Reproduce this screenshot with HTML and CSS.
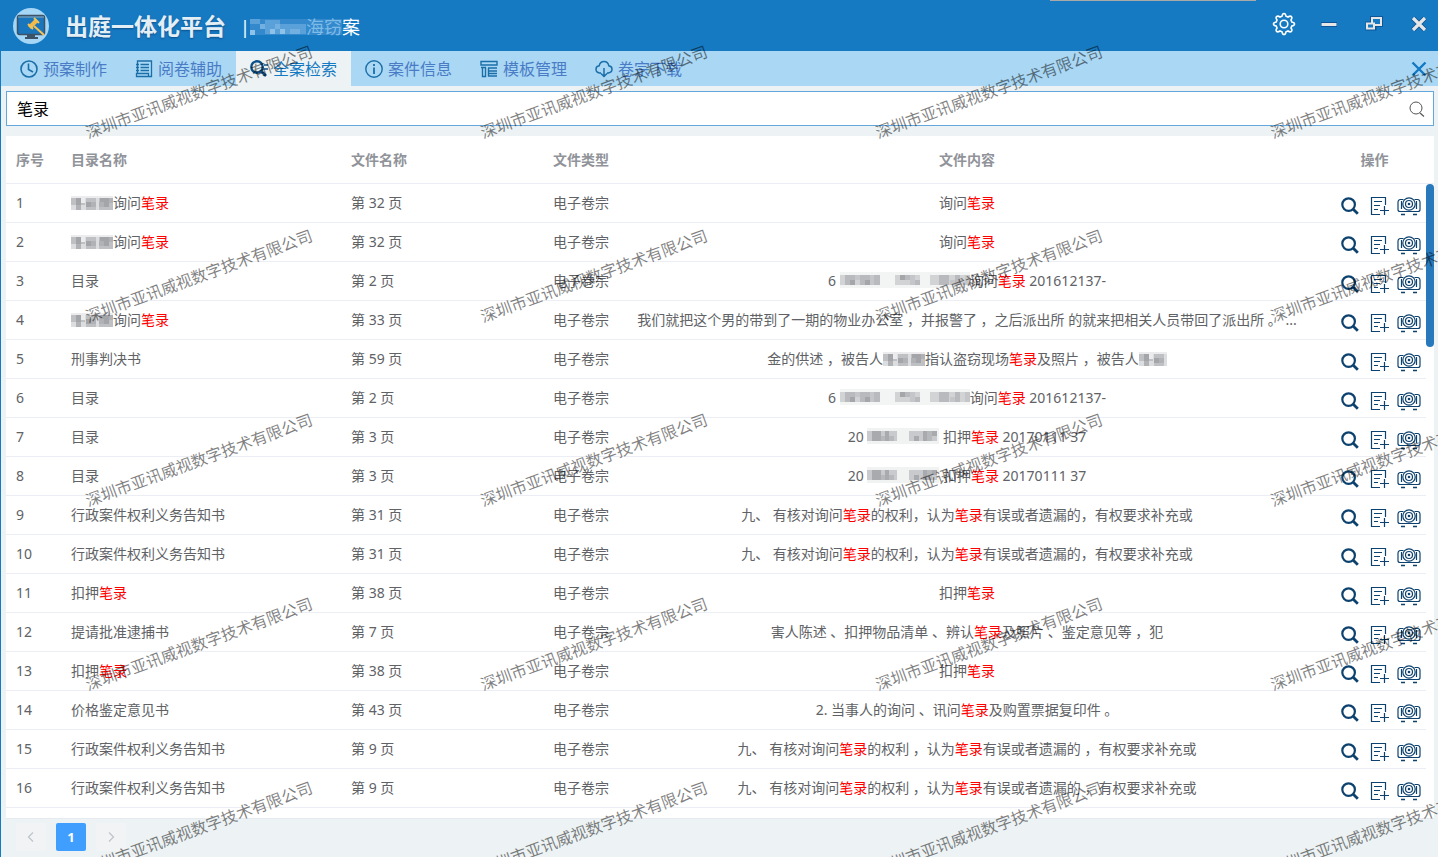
FILE: index.html
```
<!DOCTYPE html>
<html lang="zh-CN">
<head>
<meta charset="utf-8">
<title>出庭一体化平台</title>
<link rel="stylesheet" href="styles.css">
</head>
<body>
<svg class="sprite" aria-hidden="true">
  <symbol id="i-find" viewBox="0 0 18 18"><circle cx="7.6" cy="7.6" r="6.3" fill="none" stroke="currentColor" stroke-width="2.2"/><path d="M12 12l4.8 4.8" stroke="currentColor" stroke-width="2.8" fill="none"/></symbol>
  <symbol id="i-note" viewBox="0 0 20 20"><path d="M15.500 9V1.500H1.500V18.500H10M4 5.500H12M4 9.500H10M4 13.500H8M10 14.500H19M14.500 10V19" fill="none" stroke="currentColor" stroke-width="1.200"/></symbol>
  <symbol id="i-proj" viewBox="0 0 24 20"><g fill="none" stroke="currentColor" stroke-width="1.200"><path d="M6.500 3.500H3Q1 4 1 6V13.500Q1 15.500 3 15.500H21Q23 15.500 23 13.500V6Q23 4 21 3.500H17.500M4.500 5V13M19.500 5V13"/><circle cx="12" cy="8" r="6.200" fill="#fff"/><circle cx="12" cy="8" r="3.500"/></g><circle cx="12" cy="8" r="1.300" fill="currentColor"/><path d="M4 18.500H8M16 18.500H20" stroke="currentColor" stroke-width="1.400"/></symbol>
  <symbol id="m-a" viewBox="0 0 42 14"><rect width="42" height="14" fill="#dcdddf"/><path fill="#bfc0c3" d="M0 2h14v7h-14zM15 2h10v12h-10zM28 2h14v12h-14z"/><path fill="#a4a5a9" d="M5 2h5v7h-5zM15 6h5v5h-5zM29 2h9v4h-9zM33 6h5v5h-5z"/><path fill="#b1b2b5" d="M5 9h5v5h-5zM20 6h5v5h-5zM28 6h5v5h-5zM38 2h4v5h-4z"/><path fill="#ececee" d="M0 0h42v2h-42zM10 2h4v5h-4z"/></symbol>
  <symbol id="m-b" viewBox="0 0 130 16"><rect width="130" height="16" fill="#f3f4f4"/><path fill="#d2d3d5" d="M0 3h40v10h-40zM55 3h25v10h-25zM90 3h40v10h-40z"/><path fill="#b9babd" d="M5 3h10v10h-10zM20 3h10v10h-10zM34 3h6v10h-6zM60 3h10v5h-10zM75 8h5v5h-5zM99 3h10v10h-10zM115 3h5v10h-5z"/><path fill="#c5c6c9" d="M15 3h5v5h-5zM30 3h4v10h-4zM70 3h5v10h-5zM110 8h5v5h-5zM125 3h5v10h-5z"/><path fill="#a5a6aa" d="M10 8h5v5h-5zM25 8h5v5h-5zM60 3h5v5h-5z"/></symbol>
  <symbol id="m-c" viewBox="0 0 72 16"><rect width="72" height="16" fill="#f1f2f2"/><path fill="#c9cacd" d="M0 3h30v10h-30zM42 3h28v10h-28z"/><path fill="#a9aaae" d="M5 3h9v10h-9zM18 3h4v10h-4zM47 8h5v5h-5zM56 3h4v10h-4zM65 3h5v5h-5z"/><path fill="#b7b8bb" d="M14 8h4v5h-4zM22 8h5v5h-5zM60 3h5v10h-5z"/></symbol>
</svg>
<div class="app">
  <header class="bar">
    <svg class="logo" viewBox="0 0 38 38" aria-hidden="true"><circle cx="19" cy="19" r="18" fill="#a5d6f5"/><rect x="5.500" y="8.500" width="27" height="19" rx="2" fill="#1976bc" stroke="#3c5266" stroke-width="1.500"/><path d="M13 31h13M15 29h8" stroke="#3c5266" stroke-width="2"/><path d="M6 10h26" stroke="#93a9b5"/><path d="M16 19l7-7 3 3-7 7z" fill="#f3b94a"/><path d="M16 17l5 5M22 11l5 5M22 19l10 9" stroke="#f5c254" stroke-width="2"/></svg>
    <h1 class="title">出庭一体化平台</h1>
    <div class="case"><span>|</span><svg class="case-mask" viewBox="0 0 56 18" aria-hidden="true"><rect y="1" width="56" height="16" fill="#3389cc"/><path fill="#5ba1d9" d="M0 1h10v5h-10zM15 2h15v14h-15zM30 6h26v10h-26z"/><path fill="#8fc2e8" d="M20 11h5v5h-5zM30 11h5v5h-5zM0 12h5v5h-5z"/><path fill="#71b0e0" d="M10 6h5v5h-5zM25 6h5v5h-5zM40 11h10v5h-10z"/></svg><span class="half">海窃</span><span>案</span></div>
    <div class="win">
      <button aria-label="设置"><svg viewBox="0 0 24 24" width="24" height="24"><g fill="none" stroke="#fff" stroke-width="1.600"><path d="M10 4.200Q10.500 1.500 12 1.500T14 4.200L16 5Q18.300 3.400 19.400 4.600T19 8L19.800 10Q22.500 10.500 22.500 12T19.800 14L19 16Q20.600 18.300 19.400 19.400T16 19L14 19.800Q13.500 22.500 12 22.500T10 19.800L8 19Q5.700 20.600 4.600 19.400T5 16L4.200 14Q1.500 13.500 1.500 12T4.200 10L5 8Q3.400 5.700 4.600 4.600T8 5Z"/><circle cx="12" cy="12" r="3.800"/></g></svg></button>
      <button aria-label="最小化"><svg viewBox="0 0 18 18" width="18" height="18"><path d="M1 9.500h16" stroke="#0d5798" stroke-width="5"/><path d="M1.500 9.500h15" stroke="#e6e6e6" stroke-width="3"/></svg></button>
      <button aria-label="还原"><svg viewBox="0 0 18 18" width="18" height="18"><g fill="none" stroke="#0d5798" stroke-width="4"><path d="M7 3h9v7H7zM2.500 8.500h7v5h-7z"/></g><path d="M7 3h9v7H7z" fill="#167ac2" stroke="#e6e6e6" stroke-width="2"/><path d="M2 8.500h7v5h-7z" fill="#167ac2" stroke="#e6e6e6" stroke-width="2"/></svg></button>
      <button aria-label="关闭"><svg viewBox="0 0 18 18" width="18" height="18"><path d="M3 3l12 12M15 3L3 15" stroke="#0d5798" stroke-width="5"/><path d="M3 3l12 12M15 3L3 15" stroke="#e6e6e6" stroke-width="3.200"/></svg></button>
    </div>
    <span class="notch"></span>
  </header>

  <nav class="tabs">
    <button class="tab"><svg viewBox="0 0 18 18"><g fill="none" stroke="currentColor" stroke-width="1.600"><circle cx="9" cy="9" r="8"/><path d="M8.500 3.500V9.500L13 12"/></g></svg>预案制作</button>
    <button class="tab"><svg viewBox="0 0 18 18"><g fill="none" stroke="currentColor" stroke-width="1.300"><path d="M2.500 13V1H16.500V16.500H1.500V13.500H13.500V16M5.500 4.500H14M5.500 7.500H14M5.500 10.500H14M1 4.500H4M1 7.500H4M1 10.500H4"/></g></svg>阅卷辅助</button>
    <button class="tab on"><svg viewBox="0 0 18 18"><circle cx="7" cy="7" r="5.700" fill="none" stroke="currentColor" stroke-width="2.400"/><path d="M11 11l5 5" stroke="currentColor" stroke-width="2.600"/><path d="M14 5h4M14 9h4" stroke="currentColor" stroke-width="1.600"/></svg>全案检索</button>
    <button class="tab"><svg viewBox="0 0 18 18"><circle cx="9" cy="9" r="8.200" fill="none" stroke="currentColor" stroke-width="1.400"/><path d="M9 7.500V14M9 4V6" stroke="currentColor" stroke-width="1.800"/></svg>案件信息</button>
    <button class="tab"><svg viewBox="0 0 18 18"><g fill="none" stroke="currentColor" stroke-width="1.400"><path d="M1 1.500H17V5H1ZM1 7.500H5.500V16.500H2.500V7.500M8 8H17M8.500 8V16.500M8 11H17M8 13.500H17M8 16H17"/></g></svg>模板管理</button>
    <button class="tab"><svg viewBox="0 0 18 18"><path d="M6 13H4.500Q1 12.500 1 9.300T4.200 5.800Q5 1.500 9 1.500T13.800 5.800Q17 6.300 17 9.300T13.500 13H12M9 8V16M6 13.500L9 16.500L12 13.500" fill="none" stroke="currentColor" stroke-width="1.500"/></svg>卷宗下载</button>
    <button class="tabs-close" aria-label="关闭页签"><svg viewBox="0 0 16 16"><path d="M1.500 1.500l13 13M14.500 1.500l-13 13" stroke="#1479c2" stroke-width="2.400"/></svg></button>
  </nav>

  <main class="main">
    <form class="search">
      <input type="text" value="笔录" aria-label="检索内容">
      <button type="button" aria-label="搜索"><svg viewBox="0 0 16 16"><circle cx="7" cy="7" r="6" fill="none" stroke="#555"/><path d="M11 12l4 3.500" stroke="#555" stroke-width="1.200"/></svg></button>
    </form>

    <section class="panel">
      <table>
        <colgroup><col class="c-no"><col class="c-dir"><col class="c-file"><col class="c-type"><col><col class="c-act"><col class="c-gut"></colgroup>
        <thead><tr><th>序号</th><th>目录名称</th><th>文件名称</th><th>文件类型</th><th class="mid">文件内容</th><th class="mid ops">操作</th><th></th></tr></thead>
        <tbody>
          <tr><td>1</td><td><svg class="m-a"><use href="#m-a"/></svg>询问<em>笔录</em></td><td>第 32 页</td><td>电子卷宗</td><td class="mid">询问<em>笔录</em></td><td class="act"><div><button aria-label="查看"><svg class="find"><use href="#i-find"/></svg></button><button aria-label="加入"><svg class="note"><use href="#i-note"/></svg></button><button aria-label="投影"><svg class="proj"><use href="#i-proj"/></svg></button></div></td></tr>
          <tr><td>2</td><td><svg class="m-a"><use href="#m-a"/></svg>询问<em>笔录</em></td><td>第 32 页</td><td>电子卷宗</td><td class="mid">询问<em>笔录</em></td><td class="act"><div><button aria-label="查看"><svg class="find"><use href="#i-find"/></svg></button><button aria-label="加入"><svg class="note"><use href="#i-note"/></svg></button><button aria-label="投影"><svg class="proj"><use href="#i-proj"/></svg></button></div></td></tr>
          <tr><td>3</td><td>目录</td><td>第 2 页</td><td>电子卷宗</td><td class="mid">6 <svg class="m-b"><use href="#m-b"/></svg>询问<em>笔录</em> 201612137-</td><td class="act"><div><button aria-label="查看"><svg class="find"><use href="#i-find"/></svg></button><button aria-label="加入"><svg class="note"><use href="#i-note"/></svg></button><button aria-label="投影"><svg class="proj"><use href="#i-proj"/></svg></button></div></td></tr>
          <tr><td>4</td><td><svg class="m-a"><use href="#m-a"/></svg>询问<em>笔录</em></td><td>第 33 页</td><td>电子卷宗</td><td class="mid">我们就把这个男的带到了一期的物业办公室 ，并报警了 ，之后派出所 的就来把相关人员带回了派出所 。 ...</td><td class="act"><div><button aria-label="查看"><svg class="find"><use href="#i-find"/></svg></button><button aria-label="加入"><svg class="note"><use href="#i-note"/></svg></button><button aria-label="投影"><svg class="proj"><use href="#i-proj"/></svg></button></div></td></tr>
          <tr><td>5</td><td>刑事判决书</td><td>第 59 页</td><td>电子卷宗</td><td class="mid">金的供述 ，被告人<svg class="m-a"><use href="#m-a"/></svg>指认盗窃现场<em>笔录</em>及照片 ，被告人<svg class="m-s" viewBox="0 0 28 14"><use href="#m-a" width="42" height="14"/></svg></td><td class="act"><div><button aria-label="查看"><svg class="find"><use href="#i-find"/></svg></button><button aria-label="加入"><svg class="note"><use href="#i-note"/></svg></button><button aria-label="投影"><svg class="proj"><use href="#i-proj"/></svg></button></div></td></tr>
          <tr><td>6</td><td>目录</td><td>第 2 页</td><td>电子卷宗</td><td class="mid">6 <svg class="m-b"><use href="#m-b"/></svg>询问<em>笔录</em> 201612137-</td><td class="act"><div><button aria-label="查看"><svg class="find"><use href="#i-find"/></svg></button><button aria-label="加入"><svg class="note"><use href="#i-note"/></svg></button><button aria-label="投影"><svg class="proj"><use href="#i-proj"/></svg></button></div></td></tr>
          <tr><td>7</td><td>目录</td><td>第 3 页</td><td>电子卷宗</td><td class="mid">20 <svg class="m-c"><use href="#m-c"/></svg> 扣押<em>笔录</em> 20170111 37</td><td class="act"><div><button aria-label="查看"><svg class="find"><use href="#i-find"/></svg></button><button aria-label="加入"><svg class="note"><use href="#i-note"/></svg></button><button aria-label="投影"><svg class="proj"><use href="#i-proj"/></svg></button></div></td></tr>
          <tr><td>8</td><td>目录</td><td>第 3 页</td><td>电子卷宗</td><td class="mid">20 <svg class="m-c"><use href="#m-c"/></svg> 扣押<em>笔录</em> 20170111 37</td><td class="act"><div><button aria-label="查看"><svg class="find"><use href="#i-find"/></svg></button><button aria-label="加入"><svg class="note"><use href="#i-note"/></svg></button><button aria-label="投影"><svg class="proj"><use href="#i-proj"/></svg></button></div></td></tr>
          <tr><td>9</td><td>行政案件权利义务告知书</td><td>第 31 页</td><td>电子卷宗</td><td class="mid">九、 有核对询问<em>笔录</em>的权利，认为<em>笔录</em>有误或者遗漏的，有权要求补充或</td><td class="act"><div><button aria-label="查看"><svg class="find"><use href="#i-find"/></svg></button><button aria-label="加入"><svg class="note"><use href="#i-note"/></svg></button><button aria-label="投影"><svg class="proj"><use href="#i-proj"/></svg></button></div></td></tr>
          <tr><td>10</td><td>行政案件权利义务告知书</td><td>第 31 页</td><td>电子卷宗</td><td class="mid">九、 有核对询问<em>笔录</em>的权利，认为<em>笔录</em>有误或者遗漏的，有权要求补充或</td><td class="act"><div><button aria-label="查看"><svg class="find"><use href="#i-find"/></svg></button><button aria-label="加入"><svg class="note"><use href="#i-note"/></svg></button><button aria-label="投影"><svg class="proj"><use href="#i-proj"/></svg></button></div></td></tr>
          <tr><td>11</td><td>扣押<em>笔录</em></td><td>第 38 页</td><td>电子卷宗</td><td class="mid">扣押<em>笔录</em></td><td class="act"><div><button aria-label="查看"><svg class="find"><use href="#i-find"/></svg></button><button aria-label="加入"><svg class="note"><use href="#i-note"/></svg></button><button aria-label="投影"><svg class="proj"><use href="#i-proj"/></svg></button></div></td></tr>
          <tr><td>12</td><td>提请批准逮捕书</td><td>第 7 页</td><td>电子卷宗</td><td class="mid">害人陈述 、扣押物品清单 、辨认<em>笔录</em>及照片 、鉴定意见等 ，犯</td><td class="act"><div><button aria-label="查看"><svg class="find"><use href="#i-find"/></svg></button><button aria-label="加入"><svg class="note"><use href="#i-note"/></svg></button><button aria-label="投影"><svg class="proj"><use href="#i-proj"/></svg></button></div></td></tr>
          <tr><td>13</td><td>扣押<em>笔录</em></td><td>第 38 页</td><td>电子卷宗</td><td class="mid">扣押<em>笔录</em></td><td class="act"><div><button aria-label="查看"><svg class="find"><use href="#i-find"/></svg></button><button aria-label="加入"><svg class="note"><use href="#i-note"/></svg></button><button aria-label="投影"><svg class="proj"><use href="#i-proj"/></svg></button></div></td></tr>
          <tr><td>14</td><td>价格鉴定意见书</td><td>第 43 页</td><td>电子卷宗</td><td class="mid">2. 当事人的询问 、讯问<em>笔录</em>及购置票据复印件 。</td><td class="act"><div><button aria-label="查看"><svg class="find"><use href="#i-find"/></svg></button><button aria-label="加入"><svg class="note"><use href="#i-note"/></svg></button><button aria-label="投影"><svg class="proj"><use href="#i-proj"/></svg></button></div></td></tr>
          <tr><td>15</td><td>行政案件权利义务告知书</td><td>第 9 页</td><td>电子卷宗</td><td class="mid">九、 有核对询问<em>笔录</em>的权利 ，认为<em>笔录</em>有误或者遗漏的 ，有权要求补充或</td><td class="act"><div><button aria-label="查看"><svg class="find"><use href="#i-find"/></svg></button><button aria-label="加入"><svg class="note"><use href="#i-note"/></svg></button><button aria-label="投影"><svg class="proj"><use href="#i-proj"/></svg></button></div></td></tr>
          <tr><td>16</td><td>行政案件权利义务告知书</td><td>第 9 页</td><td>电子卷宗</td><td class="mid">九、 有核对询问<em>笔录</em>的权利 ，认为<em>笔录</em>有误或者遗漏的 ，有权要求补充或</td><td class="act"><div><button aria-label="查看"><svg class="find"><use href="#i-find"/></svg></button><button aria-label="加入"><svg class="note"><use href="#i-note"/></svg></button><button aria-label="投影"><svg class="proj"><use href="#i-proj"/></svg></button></div></td></tr>
        </tbody>
      </table>
      <span class="thumb"></span>
    </section>
  </main>

  <footer class="pager">
    <button aria-label="上一页"><svg viewBox="0 0 12 12"><path d="M8 1.500L3.500 6L8 10.500" fill="none" stroke="#c0c4cc" stroke-width="1.300"/></svg></button>
    <button class="cur">1</button>
    <button aria-label="下一页"><svg viewBox="0 0 12 12"><path d="M4 1.500L8.500 6L4 10.500" fill="none" stroke="#c0c4cc" stroke-width="1.300"/></svg></button>
  </footer>

  <div class="marks" aria-hidden="true">
    <span>深圳市亚讯威视数字技术有限公司</span><span>深圳市亚讯威视数字技术有限公司</span><span>深圳市亚讯威视数字技术有限公司</span><span>深圳市亚讯威视数字技术有限公司</span>
    <span>深圳市亚讯威视数字技术有限公司</span><span>深圳市亚讯威视数字技术有限公司</span><span>深圳市亚讯威视数字技术有限公司</span><span>深圳市亚讯威视数字技术有限公司</span>
    <span>深圳市亚讯威视数字技术有限公司</span><span>深圳市亚讯威视数字技术有限公司</span><span>深圳市亚讯威视数字技术有限公司</span><span>深圳市亚讯威视数字技术有限公司</span>
    <span>深圳市亚讯威视数字技术有限公司</span><span>深圳市亚讯威视数字技术有限公司</span><span>深圳市亚讯威视数字技术有限公司</span><span>深圳市亚讯威视数字技术有限公司</span>
    <span>深圳市亚讯威视数字技术有限公司</span><span>深圳市亚讯威视数字技术有限公司</span><span>深圳市亚讯威视数字技术有限公司</span><span>深圳市亚讯威视数字技术有限公司</span>
  </div>
</div>
</body>
</html>
```
FILE: styles.css
```
* { box-sizing: border-box; }
body {
  margin: 0;
  font: 14px/20px "Noto Sans", "Noto Sans CJK SC", sans-serif;
  color: #606266;
  background: #edf3f4;
}
button, input { font: inherit; color: inherit; border: 0; background: none; padding: 0; margin: 0; }
button { cursor: pointer; }
svg { display: block; flex: none; }
.sprite { position: absolute; width: 0; height: 0; }

.app {
  position: relative;
  min-height: 100vh;
  display: flex;
  flex-direction: column;
  overflow: hidden;
}

.bar {
  position: relative;
  height: 51px;
  display: flex;
  align-items: center;
  padding: 0 10px 0 12px;
  background: #167ac2;
  color: #fff;
}
.logo { width: 38px; height: 38px; }
.title {
  margin: 0 0 0 15px;
  font-size: 23px;
  line-height: 32px;
  font-weight: 700;
  color: #e4eef5;
  text-shadow: 0 1px 2px #0d4f8a;
}
.case { display: flex; align-items: center; margin: 3px 0 0 14px; font-size: 18px; line-height: 24px; }
.case-mask { width: 56px; height: 18px; }
.half { color: #7dbbe8; background: linear-gradient(#3389cc, #3389cc) center / 100% 16px no-repeat; }
.win { margin: 0 0 3px auto; display: flex; align-items: center; gap: 27px; }
.win button:first-child { margin-right: -3px; }
.notch { position: absolute; top: 0; right: 182px; width: 206px; height: 1px; background: #a9a9a9; }

.tabs {
  height: 35px;
  display: flex;
  align-items: stretch;
  padding: 0 11px 0 5px;
  border-left: 1px solid #167ac2;
  background: #a9d7f4;
}
.tab {
  display: flex;
  align-items: center;
  gap: 5px;
  padding: 0 14px;
  font-size: 16px;
  color: #4a7cc6;
  white-space: nowrap;
}
.tab svg { width: 18px; height: 18px; color: #1b6fa9; }
.tab.on { background: #edf3f4; color: #167ac2; }
.tab.on svg { color: #0c4f86; }
.tabs-close { margin-left: auto; }
.tabs-close svg { width: 16px; height: 16px; }

.main {
  flex: 1;
  display: flex;
  flex-direction: column;
  gap: 10px;
  padding: 5px 4px 0 5px;
  border-left: 1px solid #167ac2;
}
.search {
  display: flex;
  align-items: center;
  height: 35px;
  padding: 0 8px 0 10px;
  border: 1px solid #63a7dc;
  background: #fff;
}
.search input { flex: 1; min-width: 0; font-size: 16px; color: #000; outline: 0; }
.search svg { width: 16px; height: 16px; }

.panel { position: relative; flex: 1; background: #fff; border-bottom: 1px solid #e6ebf2; }
table { width: 100%; table-layout: fixed; border-collapse: separate; border-spacing: 0; }
.c-no { width: 55px; }
.c-dir { width: 280px; }
.c-file { width: 202px; }
.c-type { width: 82px; }
.c-act { width: 117px; }
.c-gut { width: 8px; }
th, td { padding: 0 10px; text-align: left; white-space: nowrap; border-bottom: 1px solid #ebeef5; }
th { height: 48px; font-weight: 700; color: #909399; }
th:last-child { padding: 0; }
td { height: 39px; }
th.mid, td.mid { text-align: center; }
th.ops { padding: 0 0 0 14px; }
td.mid { overflow: hidden; }
td em { font-style: normal; color: #f00; }
td svg { display: inline-block; vertical-align: -2px; }
.m-a { width: 42px; height: 14px; }
.m-s { width: 28px; height: 14px; }
.m-b { width: 130px; height: 16px; }
.m-c { width: 72px; height: 16px; }
td.act { padding: 6px 5px 0 0; }
.act div { display: flex; justify-content: flex-end; align-items: center; }
.act button { display: flex; color: #0d426f; }
.act button + button { margin-left: 11px; }
.act button:last-child { margin-left: 7px; }
.act .find { width: 18px; height: 18px; }
.act .note { width: 20px; height: 20px; }
.act .proj { width: 24px; height: 20px; }
.thumb { position: absolute; top: 48px; right: 0; width: 8px; height: 163px; border-radius: 4px; background: #2779bb; }

.pager {
  display: flex;
  align-items: center;
  gap: 10px;
  height: 38px;
  padding: 0 15px 2px;
  border-left: 1px solid #167ac2;
}
.pager button {
  display: flex;
  align-items: center;
  justify-content: center;
  width: 30px;
  height: 28px;
  border-radius: 2px;
  background: #f1f3f4;
}
.pager svg { width: 12px; height: 12px; }
.pager .cur { background: #409eff; color: #fff; font-size: 13px; font-weight: 700; }

.marks {
  position: absolute;
  inset: 0;
  display: grid;
  grid-template-columns: repeat(4, 395px);
  grid-auto-rows: 184px;
  place-items: center;
  padding-left: 2px;
  overflow: hidden;
  pointer-events: none;
  font-size: 16px;
  color: rgba(0, 0, 0, 0.5);
}
.marks span { white-space: nowrap; transform: rotate(-20deg); }
```
